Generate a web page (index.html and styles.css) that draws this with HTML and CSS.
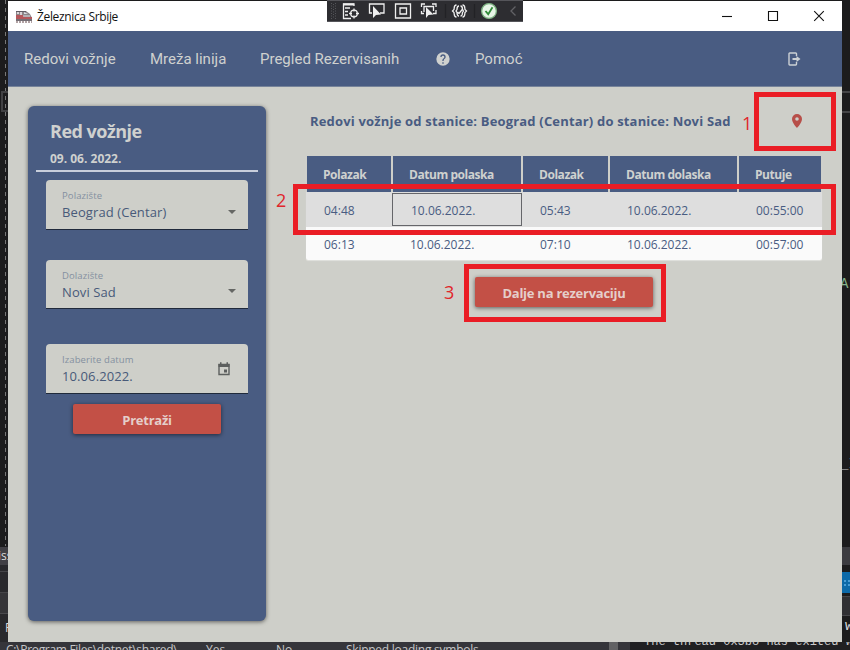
FILE: index.html
```html
<!DOCTYPE html>
<html lang="sr-Latn">
<head>
<meta charset="utf-8">
<title>Železnica Srbije</title>
<link rel="stylesheet" href="styles.css">
</head>
<body>
<div class="desktop">
  <div class="ide-guide"></div>
  <div class="ide-bracket"></div>
  <div class="ide-left"><span class="ide-iss">iss</span><span class="ide-grip"></span><span class="ide-strip"></span><span class="ide-p">P</span></div>
  <div class="ide-right">
    <i class="split s1"></i><i class="split s2"></i>
    <span class="code c1">Ar</span><span class="code c2">_<b>I</b></span>
    <i class="panel-bar"></i><i class="blue-bar"></i><i class="tool-bar"></i>
    <span class="code c3">w</span>
  </div>
  <div class="modules"><span class="m-path">C:\Program Files\dotnet\shared\</span><span class="m-yes">Yes</span><span class="m-no">No</span><span class="m-skip">Skipped loading symbols</span><i class="scroll"></i></div>
  <div class="output">The thread 0x3b8 has exited with</div>

  <main class="window">
    <header class="titlebar">
      <svg class="train" viewBox="0 0 16 13"><path d="M0 1h10l4 3 2 4v3H0z" fill="#8b8588"/><path d="M0 5h7l1 2h8v2H0z" fill="#b4575b"/><path d="M1 2h2v2H1zM4 2h2v3H4z" fill="#d9d4d8"/><path d="M8 2l4 2H8zM7 5.500h7v1H7z" fill="#dadde2"/><path d="M0 1.500h10M0 10h16" stroke="#605b63"/><path d="M0 12h16" stroke="#654449" stroke-dasharray="2 1"/></svg>
      <span class="app-name">Železnica Srbije</span>
      <div class="controls">
        <svg viewBox="0 0 12 12"><path d="M1 6.500h10"/></svg>
        <svg viewBox="0 0 12 12"><path d="M1.500 1.500h9v9h-9z"/></svg>
        <svg viewBox="0 0 12 12"><path d="M1.200 1.200l9.600 9.600M10.800 1.200l-9.600 9.600"/></svg>
      </div>
    </header>
    <nav class="nav">
      <a class="n1">Redovi vožnje</a><a class="n2">Mreža linija</a><a class="n3">Pregled Rezervisanih</a>
      <svg class="help" viewBox="0 0 24 24"><path fill="#cfd1cf" d="M12 2a10 10 0 1 0 0 20 10 10 0 0 0 0-20zm1 17h-2v-2h2zm2.070-7.750l-.9.920C13.450 12.900 13 13.500 13 15h-2v-.5c0-1.100.45-2.100 1.170-2.830l1.240-1.260c.37-.36.590-.86.590-1.410a2 2 0 0 0-4 0H8a4 4 0 0 1 8 0c0 .88-.36 1.680-.93 2.250z"/></svg>
      <a class="n4">Pomoć</a>
      <svg class="exit" viewBox="0 0 13 14"><path d="M8.500 4V1.700Q8.500 1 7.800 1H1.700Q1 1 1 1.700v10.600q0 .7.7.7h6.100q.7 0 .7-.7V10" fill="none" stroke="#ccd1d5" stroke-width="1.400"/><path d="M4.500 6h4V3.900L12.500 7l-4 3.100V8h-4z" fill="#ccd1d5"/></svg>
    </nav>
    <section class="content">
      <aside class="card">
        <div class="card-head"><h1>Red vožnje</h1><p>09. 06. 2022.</p></div>
        <div class="field f1"><div><label>Polazište</label><span class="v1">Beograd (Centar)</span></div><i class="caret"></i></div>
        <div class="field f2"><div><label>Dolazište</label><span class="v2">Novi Sad</span></div><i class="caret"></i></div>
        <div class="field f3"><div><label class="l3">Izaberite datum</label><span class="v3">10.06.2022.</span></div>
          <svg class="cal" viewBox="0 0 12 14"><path d="M1 2.500h10v10H1z" fill="none" stroke="#5c5f5e" stroke-width="1.400"/><path d="M.5 2h11v3H.5zM2 .3h1.500V2H2zM8.500.3H10V2H8.500zM6 7.500h3v3H6z" fill="#5c5f5e"/></svg></div>
        <button class="btn search"><span>Pretraži</span></button>
      </aside>
      <section class="results">
        <div class="heading"><h2>Redovi vožnje od stanice: Beograd (Centar) do stanice: Novi Sad</h2>
          <svg class="pin" viewBox="0 0 10 14"><path fill="#b74f49" fill-rule="evenodd" d="M5 0a5 5 0 0 0-5 5c0 3.700 5 9 5 9s5-5.300 5-9a5 5 0 0 0-5-5zm0 3.200a1.800 1.800 0 1 1 0 3.600 1.800 1.800 0 0 1 0-3.600z"/></svg></div>
        <div class="grid">
          <div class="row head"><span>Polazak</span><span>Datum polaska</span><span>Dolazak</span><span>Datum dolaska</span><span>Putuje</span></div>
          <div class="row selected"><span>04:48</span><span class="focus">10.06.2022.</span><span>05:43</span><span>10.06.2022.</span><span>00:55:00</span></div>
          <div class="row"><span>06:13</span><span>10.06.2022.</span><span>07:10</span><span>10.06.2022.</span><span>00:57:00</span></div>
        </div>
        <button class="btn next"><span>Dalje na rezervaciju</span></button>
      </section>
    </section>
  </main>

  <div class="debugbar">
    <svg width="196" height="22" viewBox="0 0 196 22" fill="none" stroke="#efefef" stroke-width="1.300">
      <path d="M4.500 3v16M8.500 3v16M6.500 4v15" stroke="#55565a" stroke-width="1" stroke-dasharray="1 1.500"/>
      <path d="M24 18.500h-7.500V4H27v2M18 8h5M18 11.500h3M18 15h3"/><path d="M16 4.500h11" stroke-width="2"/><circle cx="27" cy="13.500" r="3.300"/><path d="M27 8.500v3M27 15.500v3M22 13.500h3M29 13.500h3"/>
      <path d="M45 13h-2.500V4H57v9h-4"/><path d="M46 6v12l3-3 5-.5z" fill="#efefef" stroke="none"/>
      <path d="M68.500 4h15v14h-15zM73 8h6.500v6H73z"/>
      <path d="M94.500 7V4H98M105 4h4v3M109 10v3.500h-3M97 13.500h-2.500V11M97 12V6.500h9.500V11"/><path d="M99 7v11l2.500-3 5-.5z" fill="#efefef" stroke="none"/>
      <path d="M118.500 4v14M147.500 4v14" stroke="#222226"/>
      <path d="M129.500 5c-3 0-2 3-2.500 4.500L125.500 11l1.500 1.500c.5 1.500-.5 4.500 2.500 4.500M135.500 5c3 0 2 3 2.500 4.500l1.500 1.500-1.500 1.500c-.5 1.500.5 4.500-2.500 4.500"/><path d="M132 6c-2 0-2 2-2 3.500L129 11l1 1.500c0 2 0 3.500 2 3.500M133.500 6c2 0 2 2 2 3.500l1 1.500-1 1.500c0 2 0 3.500-2 3.500M130.500 12l1.500 1.500 4-5"/>
      <circle cx="162" cy="11" r="7.400" fill="#e7f5e7" stroke="#7db282"/><path d="M158.500 11l2.700 3.200 4.300-7" stroke="#2f8b38" stroke-width="1.800"/>
      <path d="M188.500 6.500L184 11l4.500 4.500" stroke="#626266"/>
    </svg>
  </div>
  <div class="mark m1"></div><div class="mark m2"></div><div class="mark m3"></div>
  <span class="num k1">1</span><span class="num k2">2</span><span class="num k3">3</span>
</div>
</body>
</html>
```
FILE: styles.css
```css
* { box-sizing: border-box; }
body { margin: 0; font-family: "Open Sans", "Noto Sans", sans-serif; }
h1, h2, p { margin: 0; }
svg { display: block; flex: none; }
.desktop { position: relative; width: 850px; height: 650px; overflow: hidden; background: #1c1c1d; }

.ide-guide { position: absolute; left: 5px; top: 0; width: 1px; height: 546px; background: repeating-linear-gradient(#777 0 4px, #1c1c1d 4px 8px); }
.ide-bracket { position: absolute; left: 1px; top: 91px; width: 10px; height: 21px; border: 2px solid #414143; }
.ide-left { position: absolute; left: 0; top: 547px; width: 8px; height: 95px; background: #29292c; color: #ddd; font-size: 12px; overflow: hidden; }
.ide-iss { display: block; height: 18px; line-height: 18px; background: #414045; text-indent: -2px; }
.ide-grip { display: block; height: 22px; margin-top: 6px; border: solid #454548; border-width: 1px 0; }
.ide-strip { display: block; height: 21px; background: #353538; border-bottom: 1px solid #4a4a4d; }
.ide-p { display: block; padding-left: 5px; line-height: 28px; }
.ide-right { position: absolute; left: 842px; top: 0; width: 8px; height: 650px; overflow: hidden; }
.ide-right i { position: absolute; left: 0; width: 8px; }
.split { height: 2px; background: #454547; }
.s1 { top: 91px; }
.s2 { top: 111px; }
.panel-bar { top: 547px; height: 18px; background: #3c3c40; }
.blue-bar { top: 572px; height: 21px; background: #0d6aa9; }
.blue-bar::after { content: ""; display: block; height: 8px; margin: 7px 0 0 1px; background: radial-gradient(#4ba0d8 .7px, transparent 1px) 0 0 / 4px 4px; }
.tool-bar { top: 596px; height: 20px; background: #303033; border: solid #47474a; border-width: 1px 0; }
.code { position: absolute; left: 0; font: 14px/16px "Liberation Mono", monospace; color: #85b28a; }
.code b { font-weight: normal; color: #4eb197; }
.c1 { top: 276px; left: -2px; }
.c2 { top: 456px; left: -2px; color: #ccc; }
.c3 { top: 618px; left: 3px; color: #ddd; }
.modules { position: absolute; left: 0; top: 642px; width: 630px; height: 8px; overflow: hidden; background: #35353a; color: #c6c6c8; font-size: 12px; line-height: 16px; }
.modules span { position: absolute; top: 0; white-space: nowrap; }
.m-path { left: 6px; letter-spacing: -.3px; }
.m-yes { left: 206px; }
.m-no { left: 276px; }
.m-skip { left: 346px; letter-spacing: -.25px; }
.scroll { position: absolute; left: 609px; width: 9px; height: 8px; background: #626264; }
.output { position: absolute; left: 630px; top: 642px; width: 220px; height: 8px; padding-left: 14px; overflow: hidden; background: #202022; color: #ccc; white-space: nowrap; font: 12px/0 "Liberation Mono", monospace; }

.window { position: absolute; left: 8px; top: 1px; width: 834px; height: 641px; display: flex; flex-direction: column; background: #cecfc9; }
.titlebar { height: 30px; flex: none; display: flex; align-items: center; padding-left: 8px; background: #fff; }
.train { width: 16px; height: 13px; }
.app-name { margin-left: 5px; color: #111; font-size: 12px; letter-spacing: -.35px; white-space: nowrap; }
.controls { margin-left: auto; margin-right: 17px; display: flex; gap: 34px; }
.controls svg { width: 12px; height: 12px; fill: none; stroke: #111; stroke-width: 1.100; }
.nav { height: 56px; flex: none; display: flex; align-items: center; padding-left: 16px; background: #495c82; border-bottom: 1px solid #77849a; color: #cfd1cf; font: 15px Roboto, sans-serif; white-space: nowrap; }
.n1 { width: 126px; }
.n2 { width: 110px; }
.n3 { width: 176px; }
.help { width: 16px; height: 16px; margin-left: -1px; margin-right: 24px; }
.exit { width: 13px; height: 14px; margin-left: auto; margin-right: 41px; }
.content { flex: 1; display: flex; padding: 19px 20px 21px; gap: 40px; }

.card { width: 238px; height: 515px; flex: none; display: flex; flex-direction: column; align-items: center; background: #495c82; border-radius: 6px; box-shadow: 0 1px 4px rgba(0,0,0,.55); color: #cfd1cf; }
.card-head { width: 222px; height: 66px; padding: 13px 14px 0; border-bottom: 2px solid #c8cedb; font-weight: 700; white-space: nowrap; }
h1 { font-size: 18px; line-height: 24px; letter-spacing: -.5px; }
.card-head p { margin-top: 7px; font-size: 12px; line-height: 18px; }
.field { width: 202px; height: 50px; flex: none; display: flex; align-items: center; justify-content: space-between; padding: 0 12px 0 16px; background: #cecfc9; border-bottom: 1px solid #202a3b; border-radius: 4px 4px 0 0; color: #485a79; white-space: nowrap; }
.field label { display: block; margin-top: 1px; font-size: 9.500px; line-height: 14px; letter-spacing: .1px; color: #8490a0; }
.field span { display: block; font-size: 13px; line-height: 18px; letter-spacing: .1px; }
.f1 { margin-top: 8px; }
.f2 { margin-top: 30px; height: 49px; }
.f3 { margin-top: 35px; padding-right: 18px; }
.caret { border: solid transparent; border-width: 4px 4px 0; border-top-color: #656764; margin-top: 14px; }
.cal { width: 12px; height: 14px; }
.btn { border: 0; padding: 2px 0 0; height: 30px; flex: none; border-radius: 2px; background: #c35046; box-shadow: 0 1px 4px rgba(0,0,0,.55); color: #e5ceca; font: 700 13px "Open Sans", sans-serif; letter-spacing: -.25px; }
.search { width: 148px; margin-top: 10px; }

.results { width: 530px; display: flex; flex-direction: column; }
.heading { height: 50px; display: flex; align-items: flex-start; padding: 5px 0 0 4px; color: #495c82; }
h2 { width: 482px; font-size: 13px; line-height: 20px; letter-spacing: .175px; white-space: nowrap; }
.pin { width: 10px; height: 14px; margin-top: 3px; }
.grid { width: 516px; height: 104px; flex: none; color: #495c82; font-size: 12px; border-radius: 0 0 2px 2px; overflow: hidden; box-shadow: 0 1px 1px #e2e2de; }
.row { display: grid; grid-template-columns: 86px 130px 87px 129px 84px; height: 33px; background: #fafafa; }
.row span { display: flex; align-items: center; padding: 2px 0 0 18px; white-space: nowrap; }
.row.head { height: 36px; padding: 0 1px; background: #cecfc9; grid-template-columns: 84px 128px 85px 127px 82px; gap: 2px; color: #cfd1cf; font-weight: 700; letter-spacing: -.45px; }
.head span { padding: 0 0 0 16px; background: #495c82; }
.row.selected { height: 35px; background: #dedede; }
.row .focus { height: 33px; margin-top: 1px; border: 1px solid #65666a; }
.next { width: 178px; margin: 17px 0 0 169px; }

.debugbar { position: absolute; left: 327px; top: 0; width: 196px; height: 22px; background: #2d2d31; border: solid #55555a; border-width: 1px 0; }
.debugbar svg { margin-top: -1px; }
.mark { position: absolute; border: 5px solid #ea1d25; }
.m1 { left: 754px; top: 92px; width: 82px; height: 59px; }
.m2 { left: 293px; top: 184px; width: 543px; height: 51px; }
.m3 { left: 464px; top: 264px; width: 202px; height: 58px; }
.num { position: absolute; color: #e0262b; font-size: 18px; line-height: 24px; }
.k1 { left: 742px; top: 111px; }
.k2 { left: 276px; top: 188px; }
.k3 { left: 444px; top: 280px; }
```
